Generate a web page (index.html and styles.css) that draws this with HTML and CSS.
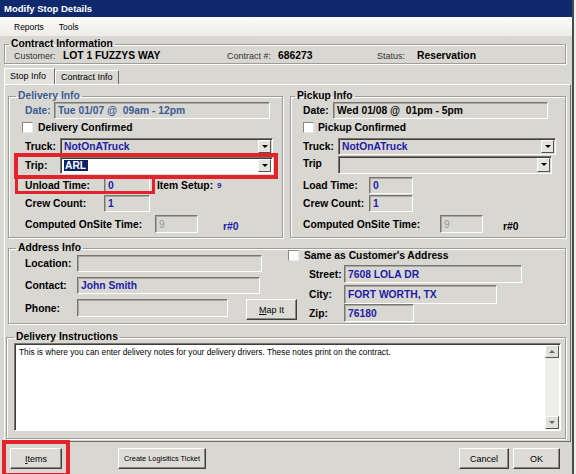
FILE: index.html
```html
<!DOCTYPE html>
<html lang="en">
<head>
  <meta charset="UTF-8" />
  <meta name="viewport" content="width=device-width, initial-scale=1.0"/>
  <title>Modify Stop Details</title>
  <link rel="stylesheet" href="styles.css">
</head>
<body>
  <div class="window">
    <div class="titlebar">Modify Stop Details</div>
    <nav class="menubar">
      <span class="menu-reports">Reports</span>
      <span class="menu-tools">Tools</span>
    </nav>

    <fieldset class="group contract">
      <legend>Contract Information</legend>
      <div class="contract-row">
        <span>Customer:</span><b>LOT 1 FUZZYS WAY</b>
        <span>Contract #:</span><b>686273</b>
        <span>Status:</span><b>Reservation</b>
      </div>
    </fieldset>

    <div class="tabs">
      <span class="tab active">Stop Info</span>
      <span class="tab">Contract Info</span>
    </div>

    <div class="panel">
      <div class="stops">
        <!-- delivery side -->
        <fieldset class="group stop delivery">
          <legend>Delivery Info</legend>
          <div class="row r-date">
            <label class="lab w-date">Date:</label>
            <div class="field ro date">Tue 01/07 @  09am - 12pm</div>
          </div>
          <div class="row r-check">
            <span class="check"></span>
            <span class="check-lab">Delivery Confirmed</span>
          </div>
          <div class="row r-truck">
            <label class="lab w-combo">Truck:</label>
            <div class="combo c-truck"><span class="val">NotOnATruck</span><span class="drop"></span></div>
          </div>
          <div class="row r-trip">
            <label class="lab w-combo">Trip:</label>
            <div class="combo white c-trip"><span class="val"><span class="sel">ARL</span></span><span class="drop"></span></div>
            <span class="mark mark-trip"></span>
          </div>
          <div class="row r-time">
            <label class="lab w-time">Unload Time:</label>
            <div class="field num">0</div>
            <span class="lab setup">Item Setup:</span>
            <span class="setup-val">9</span>
            <span class="mark mark-unload"></span>
          </div>
          <div class="row r-crew">
            <label class="lab w-time">Crew Count:</label>
            <div class="field num">1</div>
          </div>
          <div class="row r-comp">
            <label class="lab w-comp">Computed OnSite Time:</label>
            <div class="field num dim">9</div>
            <span class="rnum">r#0</span>
          </div>
        </fieldset>

        <!-- pickup side -->
        <fieldset class="group stop pickup">
          <legend>Pickup Info</legend>
          <div class="row r-date">
            <label class="lab w-date">Date:</label>
            <div class="field ro date">Wed 01/08 @  01pm - 5pm</div>
          </div>
          <div class="row r-check">
            <span class="check"></span>
            <span class="check-lab">Pickup Confirmed</span>
          </div>
          <div class="row r-truck">
            <label class="lab w-combo">Truck:</label>
            <div class="combo c-truck"><span class="val">NotOnATruck</span><span class="drop"></span></div>
          </div>
          <div class="row r-trip">
            <label class="lab w-combo trip-lab">Trip</label>
            <div class="combo c-trip"><span class="val"></span><span class="drop"></span></div>
          </div>
          <div class="row r-time">
            <label class="lab w-time">Load Time:</label>
            <div class="field num">0</div>
          </div>
          <div class="row r-crew">
            <label class="lab w-time">Crew Count:</label>
            <div class="field num">1</div>
          </div>
          <div class="row r-comp">
            <label class="lab w-comp">Computed OnSite Time:</label>
            <div class="field num dim">9</div>
            <span class="rnum">r#0</span>
          </div>
        </fieldset>
      </div>

      <fieldset class="group address">
        <legend>Address Info</legend>
        <div class="addr-grid">
          <div class="addr-left">
            <div class="row a-loc">
              <label class="lab w-addr">Location:</label>
              <div class="field f-loc"></div>
            </div>
            <div class="row a-contact">
              <label class="lab w-addr">Contact:</label>
              <div class="field f-contact">John Smith</div>
            </div>
            <div class="row a-phone">
              <label class="lab w-addr">Phone:</label>
              <div class="field f-phone"></div>
              <button class="btn map"><u>M</u>ap It</button>
            </div>
          </div>
          <div class="addr-right">
            <div class="row a-same">
              <span class="check"></span>
              <span class="check-lab">Same as Customer's Address</span>
            </div>
            <div class="row a-street">
              <label class="lab w-street">Street:</label>
              <div class="field f-street">7608 LOLA DR</div>
            </div>
            <div class="row a-city">
              <label class="lab w-street">City:</label>
              <div class="field f-city">FORT WORTH, TX</div>
            </div>
            <div class="row a-zip">
              <label class="lab w-street">Zip:</label>
              <div class="field f-zip">76180</div>
            </div>
          </div>
        </div>
      </fieldset>

      <fieldset class="group notes">
        <legend>Delivery Instructions</legend>
        <div class="memo">
          <div class="memo-text">This is where you can enter delivery notes for your delivery drivers. These notes print on the contract.</div>
          <div class="scroll">
            <span class="arrow up"></span>
            <span class="arrow down"></span>
          </div>
        </div>
      </fieldset>
    </div>

    <div class="footer">
      <button class="btn b-items"><u>I</u>tems</button>
      <span class="mark mark-items"></span>
      <button class="btn b-ticket">Create Logisitics Ticket</button>
      <span class="spacer"></span>
      <button class="btn b-cancel">Cancel</button>
      <button class="btn b-ok">OK</button>
    </div>
  </div>
</body>
</html>
```

FILE: styles.css
```css
* {
  box-sizing: border-box;
}
body {
  margin: 0;
  width: 576px;
  height: 474px;
  overflow: hidden;
  background: #eeeeec;
  font-family: "Liberation Sans", Arial, sans-serif;
  font-size: 9px;
  color: #000;
}
.window {
  width: 574px;
  height: 474px;
  background: #d9d7d1;
  border-right: 2px solid #4a4a48;
  display: flex;
  flex-direction: column;
}

/* title + menu */
.titlebar {
  height: 17px;
  background: #10286c;
  color: #fff;
  font-weight: bold;
  font-size: 9.5px;
  line-height: 17px;
  padding-left: 4px;
}
.menubar {
  height: 19px;
  background: linear-gradient(#fbfbfa, #edece8);
  display: flex;
  align-items: center;
  padding-left: 14px;
  gap: 15px;
  font-size: 8.5px;
}

/* group boxes */
.group {
  margin: 0;
  padding: 0;
  min-width: 0;
  border: 1px solid #9e9c96;
  box-shadow: inset 1px 1px 0 #fff, 1px 1px 0 #fff;
}
.group legend {
  font-weight: bold;
  font-size: 10.3px;
  line-height: 12px;
  padding: 0 2px;
  margin-left: 7px;
}
.contract {
  margin: 2px 6px 0 4px;
  height: 26px;
}
.contract legend {
  margin-left: 4px;
}
.contract-row {
  display: grid;
  grid-template-columns: 49px 164px 51px 99px 40px auto;
  padding-left: 9px;
  font-size: 9px;
  line-height: 12px;
}
.contract-row span {
  color: #333;
}
.contract-row b {
  font-size: 10.3px;
}

/* tabs */
.tabs {
  display: flex;
  align-items: flex-end;
  height: 18px;
  padding-left: 4px;
  margin-top: 2px;
}
.tab {
  height: 14px;
  line-height: 13px;
  padding: 0 5px;
  font-size: 9px;
  border: 1px solid #fff;
  border-bottom: none;
  border-right-color: #6c6b67;
}
.tab.active {
  height: 16px;
  width: 51px;
  background: #e4e2dd;
  line-height: 15px;
}
.panel {
  margin-left: 4px;
  width: 567px;
  height: 358px;
  border: 1px solid;
  border-color: #fff #6c6b67 #6c6b67 #fff;
  padding: 5px 4px 0 3px;
}
.stops {
  display: flex;
  gap: 7px;
}
.stop {
  height: 148px;
  padding-bottom: 4px;
}
.delivery {
  width: 275px;
  padding-left: 16px;
}
.delivery legend {
  color: #3b5b94;
  margin-left: -9px;
}
.pickup {
  width: 276px;
  padding-left: 12px;
}
.pickup legend {
  margin-left: -8px;
}

/* form rows */
.row {
  display: flex;
  align-items: center;
  position: relative;
}
.lab {
  font-weight: bold;
  font-size: 10.3px;
  flex: none;
}
.w-date { width: 29px; }
.pickup .w-date { width: 30px; }
.w-combo { width: 35px; }
.w-time { width: 79px; }
.pickup .w-time { width: 66px; }
.w-comp { width: 130px; }
.pickup .w-comp { width: 137px; }
.trip-lab {
  align-self: flex-start;
  padding-top: 1px;
}
.delivery .w-date {
  color: #3b5b94;
}
.r-date { height: 17px; }
.r-check { height: 11px; margin-top: 3px; }
.r-truck { height: 17px; margin-top: 5px; }
.r-trip { height: 17px; margin-top: 2px; }
.r-time { height: 17px; margin-top: 3px; }
.r-crew { height: 17px; margin-top: 1px; }
.r-comp { height: 18px; margin-top: 3px; }

.field {
  flex: none;
  height: 100%;
  border: 1px solid;
  border-color: #77766f #fff #fff #77766f;
  box-shadow: inset 1px 1px 0 #a9a7a1;
  background: #d9d7d1;
  display: flex;
  align-items: center;
  padding-left: 3px;
  font-weight: bold;
  font-size: 10.3px;
  color: #1c1ca8;
  white-space: pre;
}
.date {
  width: 216px;
  color: #000;
}
.pickup .date {
  width: 215px;
}
.delivery .date {
  color: #3b5b94;
}
.num {
  width: 46px;
}
.pickup .num {
  width: 44px;
}
.dim {
  width: 43px;
  font-weight: normal;
  color: #9a9a96;
}
.pickup .dim {
  width: 43px;
}
.setup {
  margin-left: 7px;
}
.setup-val {
  margin-left: 4px;
  color: #1c1ca8;
  font-weight: bold;
  font-size: 8px;
}
.rnum {
  margin-left: 25px;
  margin-top: 4px;
  font-weight: bold;
  font-size: 10.3px;
  color: #1c1ca8;
}
.pickup .rnum {
  margin-left: 20px;
  color: #000;
}

/* checkbox */
.check {
  width: 11px;
  height: 11px;
  flex: none;
  background: #fff;
  border: 1px solid;
  border-color: #8a8984 #e8e8e6 #e8e8e6 #8a8984;
}
.delivery .check {
  margin-left: -3px;
}
.check-lab {
  margin-left: 5px;
  font-weight: bold;
  font-size: 10.3px;
}
.pickup .check-lab {
  margin-left: 4px;
}

/* combo boxes */
.combo {
  flex: none;
  height: 100%;
  border: 1px solid;
  border-color: #77766f #fff #fff #77766f;
  box-shadow: inset 1px 1px 0 #3f3e3b;
  background: #d9d7d1;
  display: flex;
  align-items: center;
  padding: 1px 1px 1px 3px;
}
.combo.white {
  background: #fff;
}
.c-truck { width: 213px; }
.pickup .c-truck { width: 218px; }
.c-trip { width: 213px; }
.pickup .c-trip { width: 214px; height: 18px; margin-top: -2px; }
.combo .val {
  flex: 1;
  font-weight: bold;
  font-size: 10.3px;
  color: #1c1ca8;
}
.sel {
  background: #0b2466;
  color: #fff;
  padding: 0 2px 0 1px;
}
.drop {
  width: 13px;
  height: 100%;
  flex: none;
  background: #e6e4df;
  border: 1px solid;
  border-color: #fff #55544f #55544f #fff;
  display: flex;
  align-items: center;
  justify-content: center;
}
.drop::after {
  content: "";
  border-left: 3px solid transparent;
  border-right: 3px solid transparent;
  border-top: 3px solid #000;
}

/* red call-outs drawn over the form */
.mark {
  position: absolute;
  border: 4px solid #e2232b;
  pointer-events: none;
}
.mark-trip {
  left: -11px;
  top: -4px;
  width: 264px;
  height: 26px;
}
.mark-unload {
  left: -10px;
  top: -1px;
  width: 140px;
  height: 18px;
  border-width: 3px;
}

/* address */
.address {
  margin-top: 4px;
  width: 558px;
  height: 82px;
}
.addr-grid {
  display: grid;
  grid-template-columns: 279px auto;
}
.addr-left {
  padding-left: 16px;
}
.w-addr { width: 52px; }
.a-loc { height: 17px; margin-top: 1px; }
.a-contact { height: 17px; margin-top: 5px; }
.a-phone { height: 18px; margin-top: 5px; }
.f-loc { width: 185px; }
.f-contact { width: 183px; }
.f-phone { width: 151px; }
.map {
  flex: none;
  margin-left: 18px;
  margin-top: 3px;
  width: 51px;
  height: 20px;
}
.a-same {
  height: 11px;
  margin-top: -4px;
}
.w-street { width: 35px; }
.a-street { height: 18px; margin-top: 4px; padding-left: 21px; }
.a-city { height: 19px; margin-top: 2px; padding-left: 21px; }
.a-zip { height: 18px; margin-top: 0; padding-left: 21px; }
.f-street { width: 178px; }
.f-city { width: 153px; }
.f-zip { width: 70px; }

/* delivery notes */
.notes {
  margin: 7px 0 0 -2px;
  width: 560px;
  height: 108px;
  padding: 0 4px 0 7px;
}
.notes legend {
  margin-left: 0;
}
.memo {
  height: 88px;
  background: #fff;
  border: 1px solid;
  border-color: #77766f #fff #fff #77766f;
  box-shadow: inset 1px 1px 0 #3f3e3b;
  display: flex;
}
.memo-text {
  flex: 1;
  padding: 3px 4px;
  font-size: 8.3px;
}
.scroll {
  width: 14px;
  margin: 1px 1px 1px 0;
  background: #eeeeea;
  display: flex;
  flex-direction: column;
  justify-content: space-between;
}
.arrow {
  height: 13px;
  background: #e2e0da;
  border: 1px solid;
  border-color: #fff #55544f #55544f #fff;
  display: flex;
  align-items: center;
  justify-content: center;
}
.arrow.up::after {
  content: "";
  border-left: 3px solid transparent;
  border-right: 3px solid transparent;
  border-bottom: 3px solid #666;
}
.arrow.down::after {
  content: "";
  border-left: 3px solid transparent;
  border-right: 3px solid transparent;
  border-top: 3px solid #666;
}

/* buttons */
.btn {
  font-family: "Liberation Sans", Arial, sans-serif;
  font-size: 9px;
  color: #000;
  background: #dddbd5;
  border: 1px solid;
  border-color: #fff #3f3e3b #3f3e3b #fff;
  box-shadow: inset -1px -1px 0 #8a8984;
  padding: 0;
  height: 21px;
  white-space: nowrap;
}
.btn u {
  text-decoration: underline;
}
.footer {
  position: relative;
  display: flex;
  align-items: center;
  margin-top: 6px;
  padding: 0 12px 0 10px;
}
.b-items { width: 52px; }
.b-ticket { width: 88px; margin-left: 56px; font-size: 7.4px; }
.spacer { flex: 1; }
.b-cancel { width: 50px; }
.b-ok { width: 47px; margin-left: 4px; }
.mark-items {
  left: 2px;
  top: -8px;
  width: 68px;
  height: 37px;
}
```
